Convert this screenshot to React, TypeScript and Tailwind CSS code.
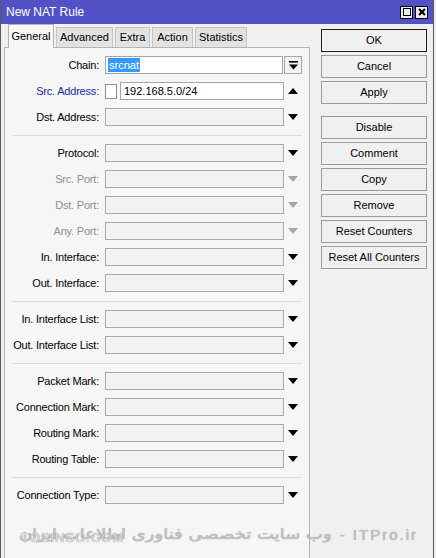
import React from 'react';

type Row = { label: string; tone?: 'normal' | 'blue' | 'muted'; kind?: 'chain' | 'src' | 'plain' };

const groups: Row[][] = [
  [
    { label: 'Chain:', kind: 'chain' },
    { label: 'Src. Address:', tone: 'blue', kind: 'src' },
    { label: 'Dst. Address:' },
  ],
  [
    { label: 'Protocol:' },
    { label: 'Src. Port:', tone: 'muted' },
    { label: 'Dst. Port:', tone: 'muted' },
    { label: 'Any. Port:', tone: 'muted' },
    { label: 'In. Interface:' },
    { label: 'Out. Interface:' },
  ],
  [{ label: 'In. Interface List:' }, { label: 'Out. Interface List:' }],
  [
    { label: 'Packet Mark:' },
    { label: 'Connection Mark:' },
    { label: 'Routing Mark:' },
    { label: 'Routing Table:' },
  ],
  [{ label: 'Connection Type:' }],
];

const tabs = [
  { name: 'Advanced', w: 'w-[57px]' },
  { name: 'Extra', w: 'w-[35px]' },
  { name: 'Action', w: 'w-[41px]' },
  { name: 'Statistics', w: 'w-[52px]' },
];

const buttons = ['Cancel', 'Apply'];
const buttons2 = ['Disable', 'Comment', 'Copy', 'Remove', 'Reset Counters', 'Reset All Counters'];

function Triangle({ up, muted }: { up?: boolean; muted?: boolean }) {
  return (
    <svg width="10" height="6" viewBox="0 0 10 6">
      <polygon
        points={up ? '0,6 10,6 5,0' : '0,0 10,0 5,6'}
        fill={muted ? '#a6a6a6' : '#000'}
      />
    </svg>
  );
}

function FieldRow({ row }: { row: Row }) {
  const color =
    row.tone === 'blue' ? 'text-[#2424a8]' : row.tone === 'muted' ? 'text-[#8e8e8e]' : 'text-black';

  return (
    <div className="flex items-center h-[18px]">
      <div className={`w-[94px] text-right whitespace-nowrap leading-none tracking-[-0.2px] ${color}`}>{row.label}</div>
      {row.kind === 'chain' ? (
        <>
          <div className="ml-[6px] w-[178px] h-[18px] border border-[#a5a5a5] bg-white flex items-center pl-[2px]">
            <span className="bg-[#3399ff] text-white px-[1px] leading-[14px]">srcnat</span>
          </div>
          <div className="ml-[1px] w-[18px] h-[18px] border border-[#a5a5a5] bg-[#f4f4f4] flex items-center justify-center">
            <svg width="9" height="9" viewBox="0 0 9 9">
              <rect x="0" y="0" width="9" height="1.6" fill="#000" />
              <polygon points="0,3.5 9,3.5 4.5,8.5" fill="#000" />
            </svg>
          </div>
        </>
      ) : row.kind === 'src' ? (
        <>
          <div className="ml-[6px] w-[12px] h-[15px] border border-[#8f8f8f] bg-white" />
          <div className="ml-[3px] w-[164px] h-[18px] border border-[#a5a5a5] bg-white flex items-center pl-[3px] leading-none">
            192.168.5.0/24
          </div>
          <div className="w-[18px] flex justify-center">
            <Triangle up />
          </div>
        </>
      ) : (
        <>
          <div className="ml-[6px] w-[179px] h-[18px] border border-[#a9a9a9] bg-[#f1f1f1]" />
          <div className="w-[18px] flex justify-center">
            <Triangle muted={row.tone === 'muted'} />
          </div>
        </>
      )}
    </div>
  );
}

function Btn({ label, main }: { label: string; main?: boolean }) {
  return (
    <div
      className={`h-[23px] flex items-center justify-center border bg-[#f0f0f0] leading-none whitespace-nowrap ${
        main ? 'border-[#1e1e1e]' : 'border-[#9a9a9a]'
      }`}
    >
      {label}
    </div>
  );
}

export default function App() {
  return (
    <div className="w-[436px] h-[558px] bg-[#f0f0f0] overflow-hidden relative text-[11px] text-black font-['Liberation_Sans',Arial,sans-serif]">
      <div className="w-[434px] h-full border-l border-r border-[#5a5a5a] flex flex-col">
        {/* title bar */}
        <div className="h-[24px] bg-[#5252c6] flex items-center justify-between pl-[5px] pr-[5px] shrink-0">
          <span className="text-white text-[12px] leading-none">New NAT Rule</span>
          <div className="flex gap-[2px]">
            <div className="w-[13px] h-[13px] bg-[#ececec] border border-black flex items-center justify-center">
              <div className="w-[8px] h-[8px] border-[1.5px] border-black" />
            </div>
            <div className="w-[13px] h-[13px] bg-[#ececec] border border-black flex items-center justify-center">
              <svg width="8" height="8" viewBox="0 0 8 8">
                <path d="M1 1 L7 7 M7 1 L1 7" stroke="#000" strokeWidth="2" />
              </svg>
            </div>
          </div>
        </div>

        <div className="flex flex-1">
          {/* left: tabs + panel */}
          <div className="ml-[3px] w-[306px] flex flex-col">
            <div className="h-[23px] flex items-end gap-[2px] pl-[4px]">
              <div className="relative z-10 w-[46px] h-[24px] -mb-[1px] bg-[#f6f6f6] border border-b-0 border-[#b4b4b4] flex items-center justify-center">
                General
              </div>
              {tabs.map((t) => (
                <div
                  key={t.name}
                  className={`${t.w} h-[20px] bg-[#e2e2e2] border border-b-0 border-[#c6c6c6] flex items-center justify-center leading-none`}
                >
                  {t.name}
                </div>
              ))}
            </div>
            <div className="flex-1 border border-b-0 border-[#b4b4b4] bg-[#f6f6f6] pt-[8px]">
              {groups.map((g, i) => (
                <div key={i}>
                  {i > 0 && <div className="mt-[9px] mb-[8px] ml-[7px] w-[290px] h-px bg-[#dcdcdc]" />}
                  <div className="flex flex-col gap-[8px]">
                    {g.map((r) => (
                      <FieldRow key={r.label} row={r} />
                    ))}
                  </div>
                </div>
              ))}
            </div>
          </div>

          {/* right: buttons */}
          <div className="ml-[11px] w-[106px] pt-[5px] flex flex-col gap-[3px]">
            <Btn label="OK" main />
            {buttons.map((b) => (
              <Btn key={b} label={b} />
            ))}
            <div className="h-[6px]" />
            {buttons2.map((b) => (
              <Btn key={b} label={b} />
            ))}
          </div>
        </div>
      </div>

      {/* watermark */}
      <div className="absolute right-[18px] top-[524px] whitespace-nowrap text-[15px] tracking-[2px] text-[#c2c2c2] font-['Liberation_Sans',sans-serif] [text-shadow:0_0_1px_#8a8a8a]">
        - ITPro.ir
      </div>
      <div
        dir="rtl"
        className="absolute right-[104px] top-[523px] origin-right scale-x-[1.2] whitespace-nowrap text-[15px] text-[#c2c2c2] font-['DejaVu_Sans',sans-serif] [text-shadow:0_0_1px_#8a8a8a]"
      >
        وب سایت تخصصی فناوری اطلاعات ایران
      </div>
      <div className="absolute left-[21px] top-[528px] whitespace-nowrap text-[13px] tracking-[1px] text-[#e4e4e4] font-['Liberation_Sans',sans-serif] [text-shadow:0_0_1px_#555]">
        TOSINSO.COM
      </div>
    </div>
  );
}
